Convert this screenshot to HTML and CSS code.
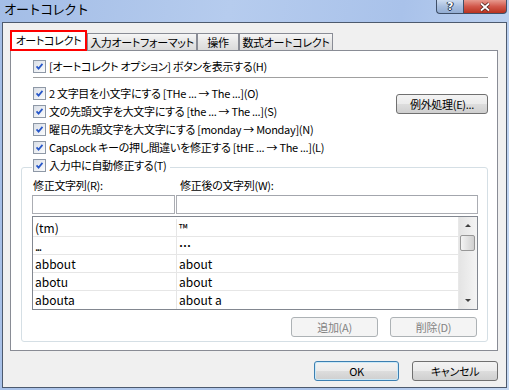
FILE: index.html
```html
<!DOCTYPE html>
<html>
<head>
    <meta charset="utf-8">
    <title>オートコレクト</title>
    <link rel="stylesheet" href="styles.css">
</head>
<body>
    <div class="window">
        <div class="titlebar">
            <span class="title">オートコレクト</span>
            <span class="tbtn help">?</span>
            <span class="tbtn close">
                <svg width="12" height="10" viewBox="0 0 12 10">
                    <path d="M2 1.5 L10 8.5 M10 1.5 L2 8.5" stroke="#4a1f1a" stroke-width="3.4" fill="none"/>
                    <path d="M2 1.5 L10 8.5 M10 1.5 L2 8.5" stroke="#ffffff" stroke-width="1.8" fill="none"/>
                </svg>
            </span>
        </div>
        <div class="client">
            <div class="tabs">
                <div class="tab active tab-auto">オートコレクト</div>
                <div class="tab tab-format">入力オートフォーマット</div>
                <div class="tab tab-action">操作</div>
                <div class="tab tab-math">数式オートコレクト</div>
            </div>
            <div class="panel">
                <div class="chk first">
                    <span class="box"><svg viewBox="0 0 13 13"><path d="M3 6.3 L5.4 9 L10 3.4"/></svg></span>
                    <span>[オートコレクト オプション] ボタンを表示する(H)</span>
                </div>
                <div class="sep"></div>
                <div class="opts">
                    <div class="optlist">
                        <div class="chk">
                            <span class="box"><svg viewBox="0 0 13 13"><path d="M3 6.3 L5.4 9 L10 3.4"/></svg></span>
                            <span>2 文字目を小文字にする [THe ... → The ...](O)</span>
                        </div>
                        <div class="chk">
                            <span class="box"><svg viewBox="0 0 13 13"><path d="M3 6.3 L5.4 9 L10 3.4"/></svg></span>
                            <span>文の先頭文字を大文字にする [the ... → The ...](S)</span>
                        </div>
                        <div class="chk">
                            <span class="box"><svg viewBox="0 0 13 13"><path d="M3 6.3 L5.4 9 L10 3.4"/></svg></span>
                            <span>曜日の先頭文字を大文字にする [monday → Monday](N)</span>
                        </div>
                        <div class="chk">
                            <span class="box"><svg viewBox="0 0 13 13"><path d="M3 6.3 L5.4 9 L10 3.4"/></svg></span>
                            <span>CapsLock キーの押し間違いを修正する [tHE ... → The ...](L)</span>
                        </div>
                    </div>
                    <button class="btn except">例外処理(E)...</button>
                </div>
                <fieldset class="group">
                    <legend class="chk">
                        <span class="box"><svg viewBox="0 0 13 13"><path d="M3 6.3 L5.4 9 L10 3.4"/></svg></span>
                        <span>入力中に自動修正する(T)</span>
                    </legend>
                    <div class="fields">
                        <span class="lbl">修正文字列(R):</span>
                        <span class="lbl lbl-to">修正後の文字列(W):</span>
                        <input type="text" class="field">
                        <input type="text" class="field">
                    </div>
                    <div class="list">
                        <div class="rows">
                            <div class="row"><span class="c1">(tm)</span><span class="c2">™</span></div>
                            <div class="row"><span class="c1 dots">...</span><span class="c2 ell">…</span></div>
                            <div class="row"><span class="c1">abbout</span><span class="c2">about</span></div>
                            <div class="row"><span class="c1">abotu</span><span class="c2">about</span></div>
                            <div class="row"><span class="c1">abouta</span><span class="c2">about a</span></div>
                        </div>
                        <div class="scroll">
                            <div class="arrow up"></div>
                            <div class="track"><div class="thumb"></div></div>
                            <div class="arrow down"></div>
                        </div>
                    </div>
                    <div class="actions">
                        <button class="btn small" disabled>追加(A)</button>
                        <button class="btn small" disabled>削除(D)</button>
                    </div>
                </fieldset>
            </div>
            <div class="footer">
                <button class="btn main ok">OK</button>
                <button class="btn main">キャンセル</button>
            </div>
        </div>
    </div>
</body>
</html>
```

FILE: styles.css
```css
* {
    box-sizing: border-box;
}
body {
    margin: 0;
    font-family: "Noto Sans CJK JP", sans-serif;
    font-size: 11px;
    letter-spacing: -0.3px;
    font-feature-settings: "palt";
    color: #000;
}
.window {
    width: 509px;
    height: 390px;
    display: flex;
    flex-direction: column;
    padding: 0 2px 2px 2px;
    background: linear-gradient(100deg, #a3bde6 0%, #b6ccee 40%, #a9c2ea 70%, #c6d9f3 100%);
}
.titlebar {
    height: 22px;
    display: flex;
    align-items: flex-start;
}
.title {
    flex: 1;
    padding: 2px 0 0 2px;
    font-size: 13px;
    line-height: 14px;
    letter-spacing: -1px;
    font-feature-settings: normal;
}
.tbtn {
    height: 14px;
    display: flex;
    align-items: center;
    justify-content: center;
    border: 1px solid #3f4f68;
    border-top: none;
}
.help {
    width: 27px;
    border-right: none;
    border-radius: 0 0 0 4px;
    background: linear-gradient(#cddcf0, #a9bfdf 50%, #93add3);
    color: #fff;
    font-family: "DejaVu Sans", sans-serif;
    font-weight: bold;
    font-size: 11px;
    text-shadow: 0 0 1px #23324a, 1px 0 0 #23324a, -1px 0 0 #23324a, 0 1px 0 #23324a;
}
.close {
    width: 44px;
    border-radius: 0 0 4px 0;
    background: linear-gradient(#e79a8f, #d2584b 50%, #b8321f);
}
.client {
    flex: 1;
    background: #f0f0f0;
    border: 1px solid #4d5a6e;
    padding: 7px 8px 0 7px;
}
.tabs {
    display: flex;
    align-items: flex-end;
    margin-bottom: -1px;
    position: relative;
}
.tab {
    height: 18px;
    line-height: 17px;
    text-align: center;
    white-space: nowrap;
    border: 1px solid #898c95;
    background: linear-gradient(#f6f6f6, #e6e6e6 50%, #dadada);
}
.tab.active {
    height: 21px;
    line-height: 17px;
    border: 2px solid #ff0000;
    background: #fff;
}
.tab-auto { width: 77px; }
.tab-format { width: 110px; }
.tab-action { width: 42px; }
.tab-math { width: 94px; }
.panel {
    height: 301px;
    background: #fff;
    border: 1px solid #898c95;
    padding: 6px 9px 0 10px;
}
.chk {
    height: 18px;
    display: flex;
    align-items: center;
    gap: 3px;
    white-space: nowrap;
}
.first,
.opts {
    margin-left: 12px;
}
.box {
    width: 13px;
    height: 13px;
    border: 1px solid #8e98a6;
    background: linear-gradient(135deg, #d9dee6, #fbfcfd);
    flex: none;
}
.box svg {
    display: block;
    width: 11px;
    height: 11px;
}
.box path {
    fill: none;
    stroke: #2757c9;
    stroke-width: 2;
}
.sep {
    margin: 2px 0 6px 12px;
    border-top: 1px solid #a0a0a0;
}
.opts {
    display: flex;
    align-items: flex-start;
}
.optlist {
    flex: 1;
}
.btn {
    font-family: inherit;
    font-size: 11px;
    letter-spacing: -0.3px;
    font-feature-settings: "palt";
    height: 20px;
    padding: 0;
    color: #000;
    border: 1px solid #707070;
    border-radius: 3px;
    background: linear-gradient(#f3f3f3, #ebebeb 50%, #dddddd 51%, #cfcfcf);
}
.btn:disabled {
    color: #838383;
    border-color: #adb2b5;
    background: #f4f4f4;
}
.except {
    width: 92px;
    margin-top: 10px;
}
.group {
    margin: 0;
    min-width: 0;
    border: 1px solid #d5dfe5;
    border-radius: 3px;
    padding: 0 9px 4px 10px;
}
.group legend {
    height: 22px;
    padding: 0 3px 4px 1px;
}
.fields {
    display: grid;
    grid-template-columns: 143px 302px;
    column-gap: 1px;
}
.lbl {
    line-height: 14px;
    padding-left: 1px;
    margin-bottom: 3px;
}
.lbl-to {
    padding-left: 4px;
}
.field {
    height: 19px;
    margin: 0;
    border: 1px solid #abadb3;
    border-top-color: #a3a6ad;
}
.list {
    margin-top: 2px;
    height: 94px;
    border: 1px solid #828790;
    display: flex;
}
.rows {
    flex: 1;
    padding-top: 2px;
    font-size: 12px;
    letter-spacing: 0;
}
.row {
    height: 18px;
    display: flex;
    border-bottom: 1px solid #e6e6e6;
    line-height: 17px;
}
.row:last-child {
    border-bottom: none;
}
.c1 {
    width: 144px;
    padding-left: 2px;
    border-right: 1px solid #e6e6e6;
}
.c2 {
    flex: 1;
    padding-left: 2px;
}
.dots {
    letter-spacing: -1.5px;
}
.ell {
    font-weight: bold;
}
.scroll {
    width: 19px;
    display: flex;
    flex-direction: column;
    border-left: 1px solid #e8e8e8;
    background: linear-gradient(to right, #e4e4e4, #f4f4f4);
}
.arrow {
    height: 17px;
    display: flex;
    align-items: center;
    justify-content: center;
}
.arrow::before {
    content: "";
    border-left: 3px solid transparent;
    border-right: 3px solid transparent;
}
.up::before {
    border-bottom: 3px solid #404040;
}
.down::before {
    border-top: 3px solid #404040;
}
.track {
    flex: 1;
    padding: 1px 0 0 1px;
}
.thumb {
    width: 15px;
    height: 16px;
    border: 1px solid #979797;
    border-radius: 2px;
    background: linear-gradient(to right, #f4f4f4, #e2e2e2 50%, #d0d0d0);
}
.actions {
    display: flex;
    justify-content: flex-end;
    gap: 12px;
    margin: 7px 1px 0 0;
}
.small {
    width: 87px;
}
.footer {
    display: flex;
    justify-content: flex-end;
    gap: 13px;
    margin-top: 10px;
}
.main {
    width: 85px;
}
.main + .main {
    width: 86px;
}
.ok {
    border-color: #3c7fb1;
    box-shadow: inset 0 0 0 1px #cbe9f8;
}
```
